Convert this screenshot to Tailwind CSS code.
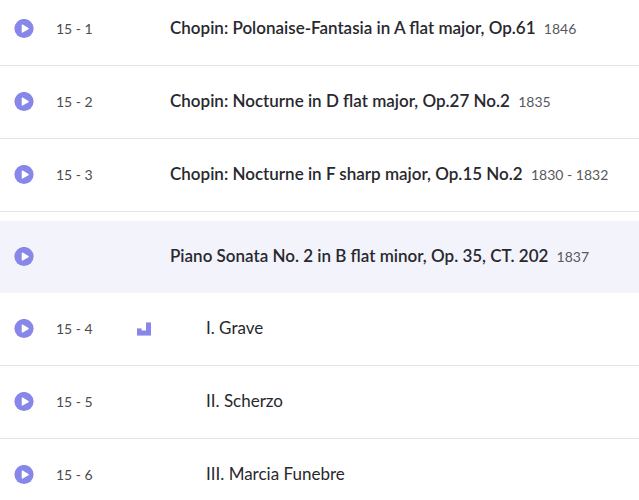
<!DOCTYPE html>
<html lang="en">
<head>
<meta charset="utf-8">
<meta name="viewport" content="width=device-width, initial-scale=1">
<title>Album tracks</title>
<script src="https://cdn.jsdelivr.net/npm/@tailwindcss/browser@4"></script>
</head>
<body class="bg-white overflow-hidden font-['Lato','Open_Sans',sans-serif] text-[#28282e]">
<svg class="hidden" aria-hidden="true">
  <symbol id="play" viewBox="0 0 20 20"><circle cx="10" cy="9.5" r="9.6" fill="#8787e9"/><path d="M8.4 6.2v6.8l5.7-3.4z" fill="#fff" stroke="#fff" stroke-width="1.4" stroke-linejoin="round"/></symbol>
</svg>
<main class="-mt-[7px]">
  <ul>
    <li class="flex items-center h-[73px] pl-3.5 border-b border-[#e4e4e6]">
      <button class="size-5 shrink-0" aria-label="Play 15 - 1"><svg class="size-5"><use href="#play"/></svg></button>
      <span class="ml-[22px] w-20 shrink-0 text-sm text-[#4b4b50]">15 - 1</span>
      <p class="ml-[34px] pb-0.5 text-[17px] font-semibold whitespace-nowrap">Chopin: Polonaise-Fantasia in A flat major, Op.61 <span class="ml-1 text-sm font-normal text-[#58585e]">1846</span></p>
    </li>
    <li class="flex items-center h-[73px] pl-3.5 border-b border-[#e4e4e6]">
      <button class="size-5 shrink-0" aria-label="Play 15 - 2"><svg class="size-5"><use href="#play"/></svg></button>
      <span class="ml-[22px] w-20 shrink-0 text-sm text-[#4b4b50]">15 - 2</span>
      <p class="ml-[34px] pb-0.5 text-[17px] font-semibold whitespace-nowrap">Chopin: Nocturne in D flat major, Op.27 No.2 <span class="ml-1 text-sm font-normal text-[#58585e]">1835</span></p>
    </li>
    <li class="flex items-center h-[73px] pl-3.5 border-b border-[#e4e4e6]">
      <button class="size-5 shrink-0" aria-label="Play 15 - 3"><svg class="size-5"><use href="#play"/></svg></button>
      <span class="ml-[22px] w-20 shrink-0 text-sm text-[#4b4b50]">15 - 3</span>
      <p class="ml-[34px] pb-0.5 text-[17px] font-semibold whitespace-nowrap">Chopin: Nocturne in F sharp major, Op.15 No.2 <span class="ml-1 text-sm font-normal text-[#58585e]">1830 - 1832</span></p>
    </li>
  </ul>
  <section class="mt-[9px]">
    <header class="flex items-center h-[72px] pl-3.5 bg-[#f3f3fc]">
      <button class="size-5 shrink-0" aria-label="Play Piano Sonata No. 2"><svg class="size-5"><use href="#play"/></svg></button>
      <h2 class="ml-[136px] pb-0.5 text-[17px] font-semibold whitespace-nowrap">Piano Sonata No. 2 in B flat minor, Op. 35, CT. 202 <span class="ml-1 text-sm font-normal text-[#58585e]">1837</span></h2>
    </header>
    <ul>
      <li class="flex items-center h-[73px] pl-3.5 border-b border-[#e4e4e6]">
        <button class="size-5 shrink-0" aria-label="Play 15 - 4"><svg class="size-5"><use href="#play"/></svg></button>
        <span class="ml-[22px] w-20 shrink-0 text-sm text-[#4b4b50]">15 - 4</span>
        <svg class="ml-px size-3.5 shrink-0" viewBox="0 0 14 14" role="img" aria-label="Now playing"><path d="M0 6h4.5v2H0zM9 0h5v2H9z" fill="#b8b8f3"/><path d="M0 7h4.5v1.5H9V1h5v12H0z" fill="#8787e9"/><path d="M0 13h14v1H0z" fill="#b8b8f3"/></svg>
        <p class="ml-[55px] pb-0.5 text-[17px] whitespace-nowrap">I. Grave</p>
      </li>
      <li class="flex items-center h-[73px] pl-3.5 border-b border-[#e4e4e6]">
        <button class="size-5 shrink-0" aria-label="Play 15 - 5"><svg class="size-5"><use href="#play"/></svg></button>
        <span class="ml-[22px] w-20 shrink-0 text-sm text-[#4b4b50]">15 - 5</span>
        <p class="ml-[70px] pb-0.5 text-[17px] whitespace-nowrap">II. Scherzo</p>
      </li>
      <li class="flex items-center h-[73px] pl-3.5 border-b border-[#e4e4e6]">
        <button class="size-5 shrink-0" aria-label="Play 15 - 6"><svg class="size-5"><use href="#play"/></svg></button>
        <span class="ml-[22px] w-20 shrink-0 text-sm text-[#4b4b50]">15 - 6</span>
        <p class="ml-[70px] pb-0.5 text-[17px] whitespace-nowrap">III. Marcia Funebre</p>
      </li>
    </ul>
  </section>
</main>
</body>
</html>
